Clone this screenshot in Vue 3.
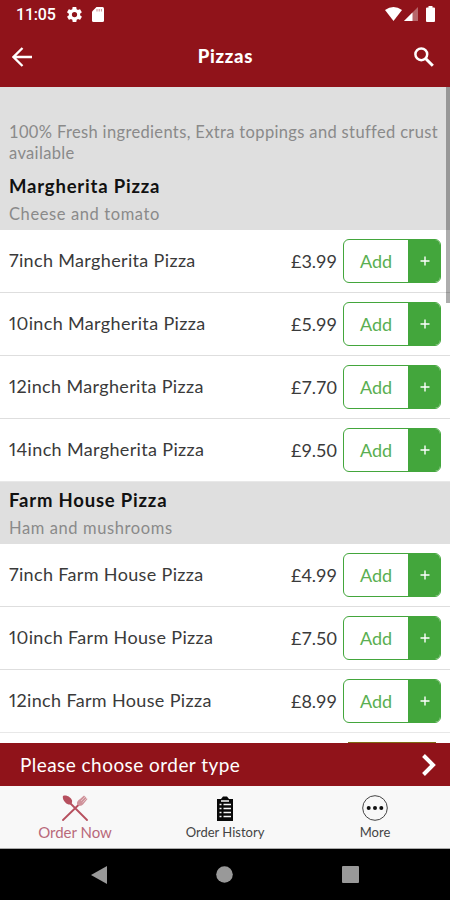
<template>
  <div class="phone">
    <header class="header">
      <div class="status-bar">
        <div class="status-left">
          <span class="clock">11:05</span>
          <svg class="gear" viewBox="2 2 20 20" width="15" height="15">
            <path fill="#fff" d="M19.4 13c0-.3.1-.6.1-1s0-.7-.1-1l2.1-1.600c.2-.2.2-.4.1-.6l-2-3.500c-.1-.2-.4-.3-.6-.2l-2.500 1c-.5-.4-1.100-.7-1.700-1l-.4-2.600c0-.2-.2-.4-.5-.4h-4c-.2 0-.4.2-.5.4l-.4 2.600c-.6.3-1.200.6-1.700 1l-2.500-1c-.2-.1-.5 0-.6.2l-2 3.500c-.1.2-.1.5.1.6L4.500 11v2l-2.100 1.600c-.2.2-.2.4-.1.6l2 3.500c.1.2.4.3.6.2l2.500-1c.5.4 1.100.7 1.700 1l.4 2.600c0 .2.2.4.5.4h4c.3 0 .5-.2.5-.4l.4-2.600c.6-.3 1.200-.6 1.700-1l2.500 1c.2.1.5 0 .6-.2l2-3.500c.1-.2.1-.5-.1-.6zM12 15.500a3.500 3.500 0 1 1 0-7 3.500 3.500 0 0 1 0 7z" />
          </svg>
          <svg viewBox="0 0 12 15" width="12" height="15">
            <path fill="#fff" d="M4.500 0H10.500Q12 0 12 1.500V13.500Q12 15 10.500 15H1.500Q0 15 0 13.500V4.500Z" />
            <path stroke="#c98b8f" d="M5 2v2.500M7.200 2v2.500M9.400 2v2.500" />
          </svg>
        </div>
        <div class="status-right">
          <svg viewBox="0 0 17 14" width="17" height="14">
            <path fill="#fff" d="M0 3Q8.500-3 17 3L8.500 14Z" />
          </svg>
          <svg class="signal" viewBox="0 0 14 14" width="14" height="14">
            <path fill="#fff" opacity=".35" d="M14 0V14H0Z" />
            <path fill="#fff" d="M8.500 5.500V14H0Z" />
          </svg>
          <svg class="battery" viewBox="0 0 9 16" width="9" height="16">
            <path fill="#fff" d="M2.500 0H6.500V1.500H8Q9 1.500 9 2.500V15Q9 16 8 16H1Q0 16 0 15V2.500Q0 1.500 1 1.500H2.500Z" />
          </svg>
        </div>
      </div>
      <div class="title-bar">
        <svg viewBox="0 0 20 20" width="20" height="20">
          <path fill="none" stroke="#fff" stroke-width="2.300" d="M20 10H2M10.500 1L1.500 10L10.500 19" />
        </svg>
        <h1>Pizzas</h1>
        <svg viewBox="0 0 20 20" width="20" height="20">
          <circle cx="7.300" cy="7.300" r="5.900" fill="none" stroke="#fff" stroke-width="2.500" />
          <path stroke="#fff" stroke-width="3" d="M11.800 11.800L18.800 18.800" />
        </svg>
      </div>
    </header>

    <main class="menu">
      <p class="intro">100% Fresh ingredients, Extra toppings and stuffed crust available</p>
      <section v-for="pizza in pizzas" :key="pizza.name">
        <div class="pizza-header">
          <h2>{{ pizza.name }}</h2>
          <p>{{ pizza.description }}</p>
        </div>
        <div v-for="item in pizza.items" :key="item.size" class="item">
          <span class="item-name">{{ item.size }} {{ pizza.name }}</span>
          <span class="price">{{ item.price }}</span>
          <button class="add-button">
            <span class="add">Add</span>
            <span class="plus">
              <svg viewBox="0 0 10 10" width="10" height="10">
                <path stroke="#fff" stroke-width="1.400" d="M5 .5V9.500M.5 5H9.500" />
              </svg>
            </span>
          </button>
        </div>
      </section>
      <!-- top edge of the next row's button -->
      <div class="next-item"></div>
      <div class="scrollbar"></div>
    </main>

    <div class="order-type">
      <span>Please choose order type</span>
      <svg viewBox="0 0 14 22" width="14" height="22">
        <path fill="none" stroke="#fff" stroke-width="4" d="M1.500 1.500L11 11L1.500 20.500" />
      </svg>
    </div>

    <nav class="tabs">
      <a class="tab tab-active">
        <svg viewBox="0 0 26 26" width="26" height="26">
          <path stroke="#b64f5e" stroke-width="1.800" stroke-linecap="round" d="M8 8L25 25M18 8.500L1 25" />
          <path fill="#b64f5e" d="M1 1C4-.5 9 2 10 5.500C10.500 8 9 10 6.500 9.500C3 8.500 0 4 1 1Z" />
          <path fill="#cf929a" d="M15 9.500C14.500 7 16 5 18 4L22 .5L23 1.500L25.500 4L21 9.500C19.500 11 17 11.500 15 9.500Z" />
          <path stroke="#f0dfe1" stroke-width=".6" d="M19 6L23.500 1.500M20.500 7.500L25 3" />
        </svg>
        <span>Order Now</span>
      </a>
      <a class="tab">
        <svg viewBox="0 0 18 26" width="18" height="26">
          <path fill="#090909" d="M1 4H5L7 1.500H11L13 4H17V26H1Z" />
          <path stroke="#f8f8f8" stroke-width="1.400" d="M3.500 9.500H5.500M7.500 9.500H15M3.500 13.500H5.500M7.500 13.500H15M3.500 17.500H5.500M7.500 17.500H15M3.500 21.500H5.500M7.500 21.500H15M5 6H13" />
        </svg>
        <span>Order History</span>
      </a>
      <a class="tab">
        <svg viewBox="0 0 26 26" width="26" height="26">
          <circle cx="13" cy="13" r="12.300" fill="none" stroke="#444" />
          <g fill="#111">
            <circle cx="6.700" cy="13" r="2" />
            <circle cx="13" cy="13" r="2" />
            <circle cx="19.300" cy="13" r="2" />
          </g>
        </svg>
        <span>More</span>
      </a>
    </nav>

    <footer class="android-nav">
      <svg viewBox="0 0 16 18" width="16" height="18"><path fill="#999" d="M16 0V18L0 9Z" /></svg>
      <svg viewBox="0 0 17 17" width="17" height="17"><circle cx="8.500" cy="8.500" r="8.300" fill="#999" /></svg>
      <svg viewBox="0 0 17 17" width="17" height="17"><rect width="17" height="17" rx="1" fill="#999" /></svg>
    </footer>
  </div>
</template>

<script setup>
import { ref } from 'vue';

const pizzas = ref([
  {
    name: 'Margherita Pizza',
    description: 'Cheese and tomato',
    items: [
      { size: '7inch', price: '£3.99' },
      { size: '10inch', price: '£5.99' },
      { size: '12inch', price: '£7.70' },
      { size: '14inch', price: '£9.50' },
    ],
  },
  {
    name: 'Farm House Pizza',
    description: 'Ham and mushrooms',
    items: [
      { size: '7inch', price: '£4.99' },
      { size: '10inch', price: '£7.50' },
      { size: '12inch', price: '£8.99' },
    ],
  },
]);
</script>

<style>
body {
  margin: 0;
}
</style>

<style scoped>
* {
  box-sizing: border-box;
  margin: 0;
}

svg {
  display: block;
  flex: none;
}

.phone {
  width: 450px;
  height: 900px;
  display: flex;
  flex-direction: column;
  overflow: hidden;
  background: #fff;
  font-family: Lato, "Liberation Sans", sans-serif;
  white-space: nowrap;
}

.header {
  height: 87px;
  flex: none;
  background: #90131a;
  color: #fff;
}

.status-bar {
  height: 28px;
  display: flex;
  justify-content: space-between;
  padding: 0 15px 0 16px;
}

.status-left,
.status-right {
  display: flex;
  align-items: center;
}

.clock {
  font: 500 16px Roboto, sans-serif;
  letter-spacing: -0.2px;
  width: 51px;
}

.gear {
  margin-right: 10px;
}

.signal {
  margin-left: 2px;
}

.battery {
  margin-left: 8px;
}

.title-bar {
  height: 57px;
  display: flex;
  align-items: center;
  justify-content: space-between;
  padding: 0 16px 0 12px;
}

h1 {
  margin: -2px 0 0 5px;
  font-size: 18.5px;
  font-weight: 900;
  letter-spacing: 0.7px;
}

.menu {
  position: relative;
  height: 656px;
  flex: none;
  overflow: hidden;
}

.intro {
  height: 84px;
  padding: 35px 9px 0;
  background: #dfdfdf;
  color: #8a8a8a;
  font-size: 16.5px;
  line-height: 21px;
  letter-spacing: 0.35px;
  white-space: normal;
}

.pizza-header {
  height: 62px;
  padding: 6px 9px 0;
  background: #dfdfdf;
}

.intro + section .pizza-header {
  height: 59px;
  padding-top: 3px;
}

h2 {
  font-size: 18.5px;
  line-height: 25px;
  letter-spacing: 0.8px;
  color: #111;
}

.pizza-header p {
  font-size: 16.5px;
  line-height: 30px;
  letter-spacing: 0.6px;
  color: #8a8a8a;
}

.item {
  height: 63px;
  display: flex;
  align-items: center;
  padding: 0 9px;
  border-bottom: 1px solid #dedede;
  color: #3a3a3a;
  font-size: 18px;
}

.item:last-child {
  border-bottom-color: #e8e8e8;
}

.item-name {
  flex: 1;
  padding-bottom: 3px;
  letter-spacing: 0.35px;
  font-variant-numeric: proportional-nums;
}

.price {
  margin-right: 6px;
}

.add-button {
  width: 98px;
  height: 44px;
  display: flex;
  padding: 0;
  border: 1px solid #43a63c;
  border-radius: 6px;
  overflow: hidden;
  background: #fff;
  font-family: inherit;
  font-size: 18px;
  color: #5aaf52;
}

.add {
  width: 64px;
  line-height: 42px;
}

.plus {
  flex: 1;
  height: 42px;
  display: flex;
  align-items: center;
  justify-content: center;
  padding-left: 1px;
  background: #43a63c;
}

.next-item {
  width: 88px;
  height: 1px;
  margin: 9px 14px 0 auto;
  background: #7c6a14;
}

.scrollbar {
  position: absolute;
  top: 0;
  right: 0;
  width: 4px;
  height: 216px;
  background: rgba(0, 0, 0, 0.32);
}

.order-type {
  height: 43px;
  display: flex;
  align-items: center;
  justify-content: space-between;
  padding: 0 14px 0 20px;
  background: #90131a;
  color: #fff;
  font-size: 19px;
  letter-spacing: 0.45px;
}

.tabs {
  height: 63px;
  display: flex;
  background: #f8f8f8;
  border-bottom: 1px solid #aaa;
}

.tab {
  flex: 1;
  display: flex;
  flex-direction: column;
  align-items: center;
  padding-top: 9px;
  font-size: 13px;
  line-height: 23px;
  color: #444;
}

.tab-active {
  color: #b9697a;
  font-size: 15px;
}

.android-nav {
  height: 51px;
  display: flex;
  align-items: center;
  gap: 109px;
  padding-left: 91px;
  background: #000;
}
</style>
